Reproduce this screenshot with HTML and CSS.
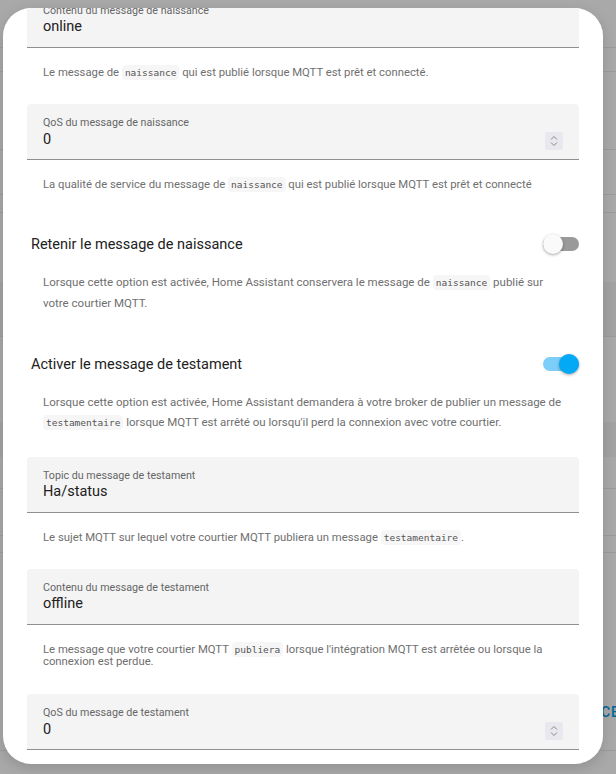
FILE: index.html
```html
<!DOCTYPE html>
<html lang="fr">
<head>
<meta charset="UTF-8" />
<meta name="viewport" content="width=device-width, initial-scale=1" />
<title>Options MQTT</title>
<link rel="stylesheet" href="styles.css">
</head>
<body>

<!-- page behind the dialog, dimmed by the scrim -->
<div class="page">
  <div class="bg-row row-48"></div>
  <div class="bg-row row-24"></div>
  <div class="bg-row row-78"></div>
  <div class="bg-row row-45"></div>
  <div class="bg-row row-18"></div>
  <div class="bg-row row-69 plain"></div>
  <div class="bg-row row-55 dark"></div>
  <div class="bg-row row-85 plain"></div>
  <div class="bg-row row-35 dark plain"></div>
  <div class="bg-row row-32"></div>
  <div class="bg-row row-47"></div>
  <div class="bg-row row-17"></div>
  <div class="bg-row row-198">
    <span class="page-btn">SÉQUENCE</span>
  </div>
</div>

<div class="dialog">
  <div class="dialog-content">

    <div class="field">
      <div class="field-label">Contenu du message de naissance</div>
      <div class="field-value">online</div>
    </div>
    <p class="helper">Le message de <code>naissance</code> qui est publié lorsque MQTT est prêt et connecté.</p>

    <div class="field">
      <div class="field-label">QoS du message de naissance</div>
      <div class="field-value">
        <span>0</span>
        <svg class="spin" width="18" height="18" viewBox="0 0 18 18">
          <rect width="18" height="18" rx="2" fill="#e8e8ee"/>
          <path d="M6 7.5 L9 4.5 L12 7.5" fill="none" stroke="#8a8a8f" stroke-width="1"/>
          <path d="M6 10.5 L9 13.5 L12 10.5" fill="none" stroke="#8a8a8f" stroke-width="1"/>
        </svg>
      </div>
    </div>
    <p class="helper">La qualité de service du message de <code>naissance</code> qui est publié lorsque MQTT est prêt et connecté</p>

    <div class="switch-row first">
      <span class="switch-title">Retenir le message de naissance</span>
      <span class="switch"><span class="knob"></span></span>
    </div>
    <p class="desc">Lorsque cette option est activée, Home Assistant conservera le message de <code>naissance</code> publié sur votre courtier MQTT.</p>

    <div class="switch-row">
      <span class="switch-title">Activer le message de testament</span>
      <span class="switch on"><span class="knob"></span></span>
    </div>
    <p class="desc">Lorsque cette option est activée, Home Assistant demandera à votre broker de publier un message de <code>testamentaire</code> lorsque MQTT est arrêté ou lorsqu'il perd la connexion avec votre courtier.</p>

    <div class="field after-desc">
      <div class="field-label">Topic du message de testament</div>
      <div class="field-value">Ha/status</div>
    </div>
    <p class="helper">Le sujet MQTT sur lequel votre courtier MQTT publiera un message <code>testamentaire</code>.</p>

    <div class="field">
      <div class="field-label">Contenu du message de testament</div>
      <div class="field-value">offline</div>
    </div>
    <p class="helper tight">Le message que votre courtier MQTT <code>publiera</code> lorsque l'intégration MQTT est arrêtée ou lorsque la connexion est perdue.</p>

    <div class="field">
      <div class="field-label">QoS du message de testament</div>
      <div class="field-value">
        <span>0</span>
        <svg class="spin" width="18" height="18" viewBox="0 0 18 18">
          <rect width="18" height="18" rx="2" fill="#e8e8ee"/>
          <path d="M6 7.5 L9 4.5 L12 7.5" fill="none" stroke="#8a8a8f" stroke-width="1"/>
          <path d="M6 10.5 L9 13.5 L12 10.5" fill="none" stroke="#8a8a8f" stroke-width="1"/>
        </svg>
      </div>
    </div>

  </div>
</div>

</body>
</html>
```

FILE: styles.css
```css
* {
  box-sizing: border-box;
}
body {
  margin: 0;
  width: 616px;
  height: 774px;
  overflow: hidden;
  background-color: #a9a9a9;
  font-family: Roboto, "Noto Sans", sans-serif;
  position: relative;
}

/* page behind */
.page {
  display: flex;
  flex-direction: column;
}
.bg-row {
  border-bottom: 1px solid #9c9c9c;
}
.bg-row.plain {
  border-bottom: none;
}
.bg-row.dark {
  background-color: #a3a3a3;
}
.row-48 { height: 48px; }
.row-24 { height: 24px; }
.row-78 { height: 78px; }
.row-45 { height: 45px; }
.row-18 { height: 18px; }
.row-69 { height: 69px; }
.row-55 { height: 55px; }
.row-85 { height: 85px; }
.row-35 { height: 35px; }
.row-32 { height: 32px; }
.row-47 { height: 47px; }
.row-17 { height: 17px; }
.row-198 {
  height: 198px;
  display: flex;
  justify-content: flex-end;
  align-items: flex-start;
  padding-top: 151px;
}
.page-btn {
  font-size: 14px;
  font-weight: 500;
  letter-spacing: 1px;
  color: #04679a;
  margin-right: -4px;
}

/* dialog */
.dialog {
  position: absolute;
  left: 3px;
  top: 8px;
  width: 600px;
  height: 756px;
  background: white;
  border-radius: 28px;
  overflow: hidden;
  box-shadow: 0 4px 14px rgba(0, 0, 0, 0.15);
}
.dialog-content {
  padding: 0 24px;
  margin-top: -16px;
}

.field {
  height: 56px;
  background-color: #f4f4f4;
  border-radius: 4px 4px 0 0;
  border-bottom: 1px solid #8f8f8f;
  padding: 12px 16px 0 16px;
}
.field.after-desc {
  margin-top: 24px;
}
.field-label {
  font-size: 10.7px;
  line-height: 14px;
  color: #666;
}
.field-value {
  font-size: 14.5px;
  line-height: 18px;
  color: #212121;
  display: flex;
  justify-content: space-between;
  align-items: center;
}
.spin {
  display: block;
  margin-top: 2px;
}

.helper {
  margin: 15px 0 21px 0;
  padding: 0 16px;
  font-size: 11.3px;
  line-height: 20px;
  color: #6f6f6f;
}
.helper.tight {
  margin: 19px 0 26px 0;
  line-height: 12px;
}

code {
  font-family: "DejaVu Sans Mono", monospace;
  font-size: 9.5px;
  color: #555;
  background-color: #f6f6f6;
  padding: 2px 3px;
  border-radius: 4px;
}

.switch-row {
  height: 48px;
  margin-top: 27px;
  padding-left: 4px;
  display: flex;
  justify-content: space-between;
  align-items: center;
}
.switch-row.first {
  margin-top: 25px;
}
.switch-title {
  font-size: 14.5px;
  color: #212121;
}
.switch {
  width: 36px;
  height: 14px;
  border-radius: 7px;
  background-color: #9a9a9a;
  display: flex;
  align-items: center;
}
.knob {
  width: 20px;
  height: 20px;
  border-radius: 50%;
  background-color: #fafafa;
  box-shadow: 0 1px 3px rgba(0, 0, 0, 0.35);
}
.switch.on {
  background-color: #7ccdf8;
  justify-content: flex-end;
}
.switch.on .knob {
  background-color: #03a9f4;
}

.desc {
  margin: 4px 0 0 0;
  padding: 0 16px;
  font-size: 11.5px;
  line-height: 20px;
  color: #6f6f6f;
}
```
